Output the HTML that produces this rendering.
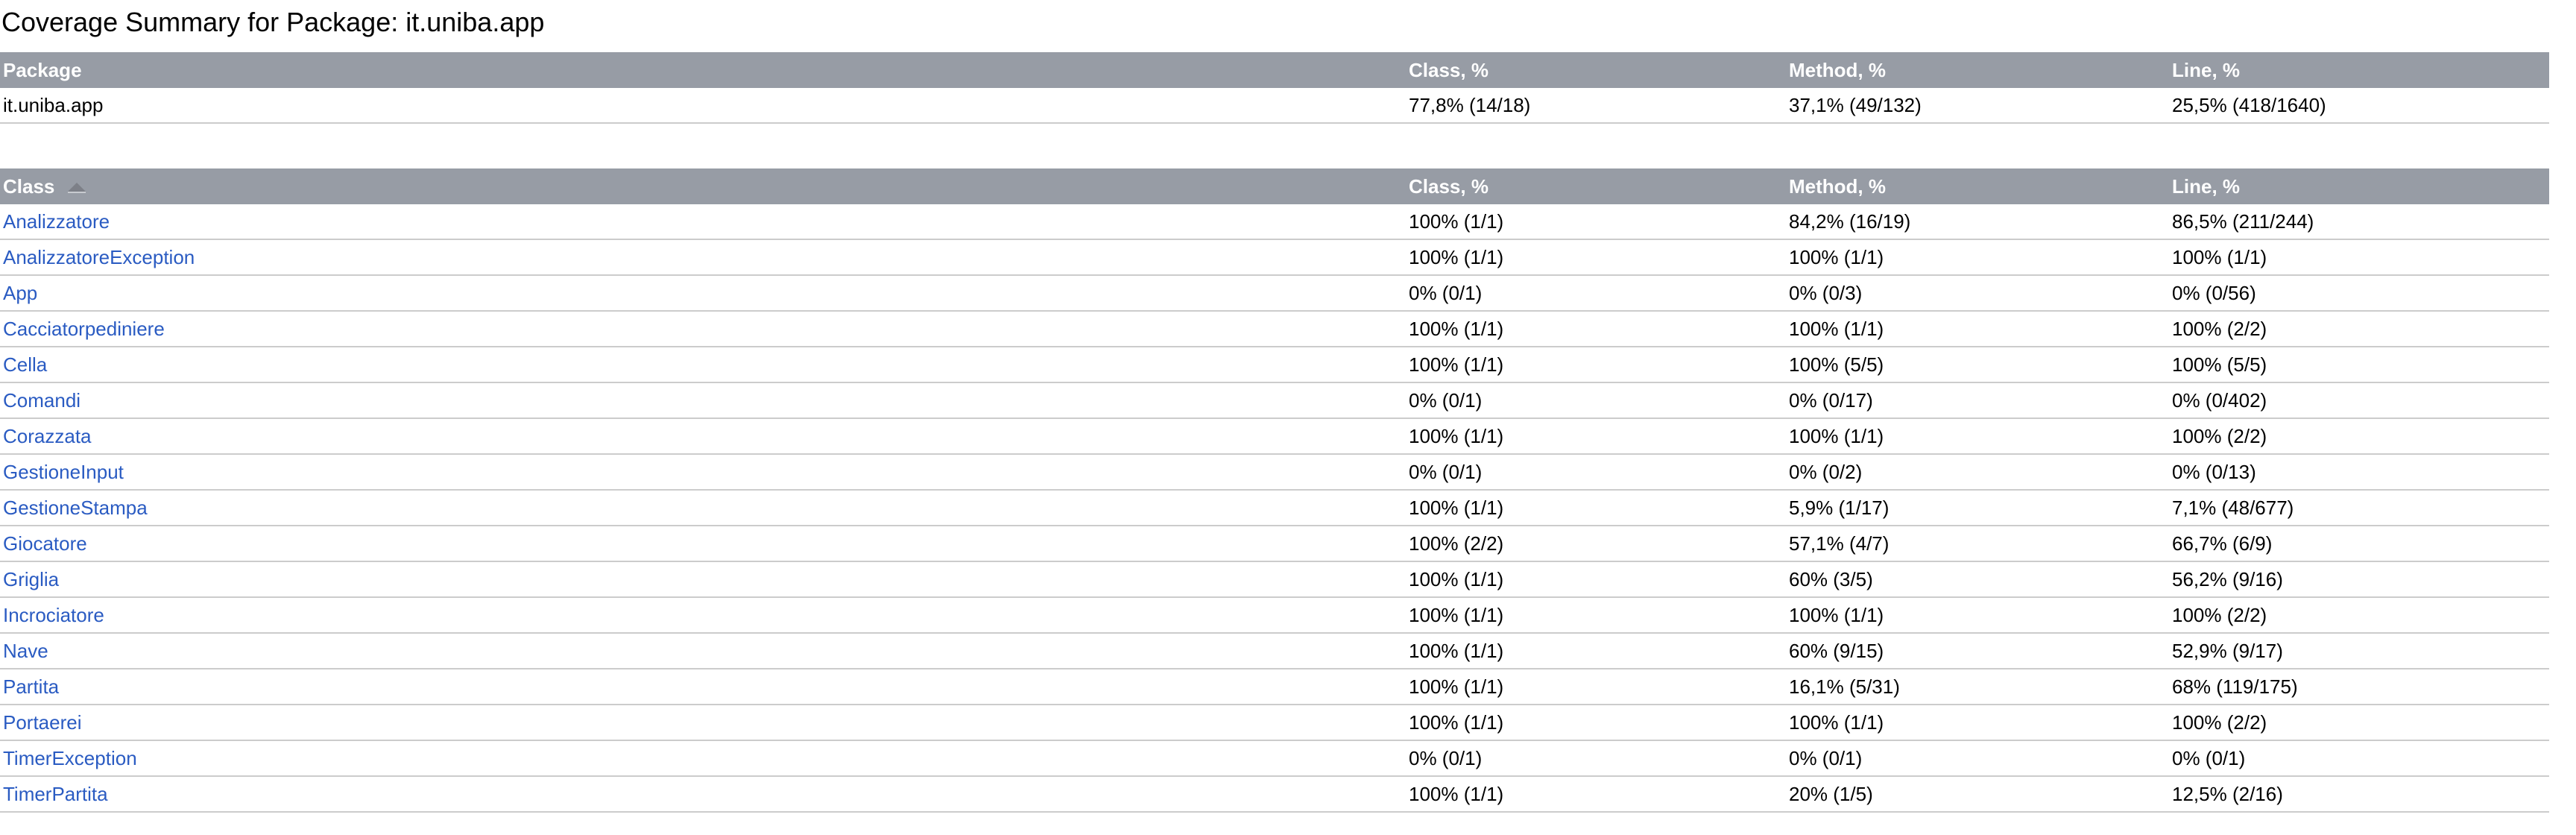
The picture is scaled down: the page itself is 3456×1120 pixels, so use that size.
<!DOCTYPE html>
<html><head><meta charset="utf-8"><style>
html,body{margin:0;padding:0;background:#fff;}
body{zoom:2;width:1728px;font-family:"Liberation Sans",Helvetica,Arial,sans-serif;font-size:13px;color:#000;}
h1{font-size:18px;font-weight:normal;margin:0;padding:0 0 0 1px;height:35px;line-height:30px;}
table{width:1710px;border-collapse:collapse;table-layout:fixed;}
th{background:#979ca5;color:#fff;font-weight:bold;text-align:left;height:24px;padding:0 0 0 2px;font-size:13px;}
td{height:23px;padding:0 0 0 2px;border-bottom:1px solid #ccc;white-space:nowrap;}
a{color:#2a5bc2;text-decoration:none;}
.c1{width:941px;}.c2{width:253px;}.c3{width:255px;}
.tri{display:inline-block;width:0;height:0;border-left:6px solid transparent;border-right:6px solid transparent;border-bottom:6px solid #7d8088;margin-left:9px;vertical-align:1px;position:relative;}
.tri:after{content:"";position:absolute;left:-6px;top:6px;width:12px;height:1px;background:#c8cbd0;}
</style></head><body>
<h1>Coverage Summary for Package: it.uniba.app</h1>
<table>
<tr><th class="c1">Package</th><th class="c2">Class, %</th><th class="c3">Method, %</th><th>Line, %</th></tr>
<tr><td>it.uniba.app</td><td>77,8% (14/18)</td><td>37,1% (49/132)</td><td>25,5% (418/1640)</td></tr>
</table>
<div style="height:30px"></div>
<table>
<tr><th class="c1">Class<span class="tri"></span></th><th class="c2">Class, %</th><th class="c3">Method, %</th><th>Line, %</th></tr>
<tr><td><a>Analizzatore</a></td><td>100% (1/1)</td><td>84,2% (16/19)</td><td>86,5% (211/244)</td></tr>
<tr><td><a>AnalizzatoreException</a></td><td>100% (1/1)</td><td>100% (1/1)</td><td>100% (1/1)</td></tr>
<tr><td><a>App</a></td><td>0% (0/1)</td><td>0% (0/3)</td><td>0% (0/56)</td></tr>
<tr><td><a>Cacciatorpediniere</a></td><td>100% (1/1)</td><td>100% (1/1)</td><td>100% (2/2)</td></tr>
<tr><td><a>Cella</a></td><td>100% (1/1)</td><td>100% (5/5)</td><td>100% (5/5)</td></tr>
<tr><td><a>Comandi</a></td><td>0% (0/1)</td><td>0% (0/17)</td><td>0% (0/402)</td></tr>
<tr><td><a>Corazzata</a></td><td>100% (1/1)</td><td>100% (1/1)</td><td>100% (2/2)</td></tr>
<tr><td><a>GestioneInput</a></td><td>0% (0/1)</td><td>0% (0/2)</td><td>0% (0/13)</td></tr>
<tr><td><a>GestioneStampa</a></td><td>100% (1/1)</td><td>5,9% (1/17)</td><td>7,1% (48/677)</td></tr>
<tr><td><a>Giocatore</a></td><td>100% (2/2)</td><td>57,1% (4/7)</td><td>66,7% (6/9)</td></tr>
<tr><td><a>Griglia</a></td><td>100% (1/1)</td><td>60% (3/5)</td><td>56,2% (9/16)</td></tr>
<tr><td><a>Incrociatore</a></td><td>100% (1/1)</td><td>100% (1/1)</td><td>100% (2/2)</td></tr>
<tr><td><a>Nave</a></td><td>100% (1/1)</td><td>60% (9/15)</td><td>52,9% (9/17)</td></tr>
<tr><td><a>Partita</a></td><td>100% (1/1)</td><td>16,1% (5/31)</td><td>68% (119/175)</td></tr>
<tr><td><a>Portaerei</a></td><td>100% (1/1)</td><td>100% (1/1)</td><td>100% (2/2)</td></tr>
<tr><td><a>TimerException</a></td><td>0% (0/1)</td><td>0% (0/1)</td><td>0% (0/1)</td></tr>
<tr><td><a>TimerPartita</a></td><td>100% (1/1)</td><td>20% (1/5)</td><td>12,5% (2/16)</td></tr>
</table>
</body></html>
